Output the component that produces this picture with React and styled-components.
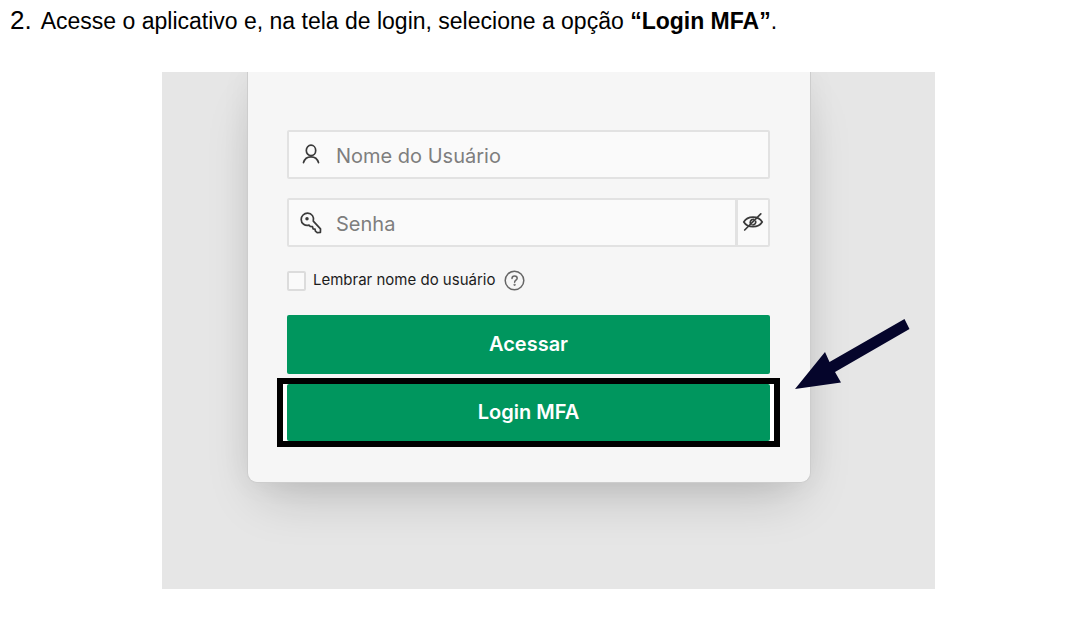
import React from 'react'
import styled, { createGlobalStyle } from 'styled-components'

const GlobalStyle = createGlobalStyle`
    * {
        box-sizing: border-box;
    }
    body {
        margin: 0;
        background: #ffffff;
        font-family: "Liberation Sans", Arial, sans-serif;
        color: #000000;
    }
`

const Page = styled.main`
    padding: 0 10px 40px;
`

const Step = styled.p`
    display: flex;
    align-items: baseline;
    gap: 9px;
    margin: 0;
    padding-top: 4px;
    font-size: 23px;
    line-height: 32px;
`

const StepNumber = styled.span`
    font-size: 26px;
`

const StepBody = styled.div`
    padding: 35px 0 0 30px;
`

const Screen = styled.figure`
    position: relative;
    max-width: 773px;
    margin: 0 auto;
    padding: 0 124px 106px 85px;
    overflow: hidden;
    background: #e6e6e6;
`

const Card = styled.form`
    display: flex;
    flex-direction: column;
    padding: 58px 40px 35px 39px;
    border: 1px solid #cdcdcd;
    border-top: 0;
    border-radius: 0 0 10px 10px;
    background: #f6f6f6;
    box-shadow: 0 24px 50px -14px rgba(0, 0, 0, 0.2), 0 0 30px rgba(0, 0, 0, 0.05);
    font-family: Inter, "Liberation Sans", sans-serif;
`

const Field = styled.div`
    display: flex;
    align-items: center;
    height: 49px;
    margin-bottom: ${props => props.$last ? '24px' : '19px'};
    padding-left: 11px;
    border: 2px solid #e2e2e2;
    border-radius: 2px;
    background: #fafafa;
`

const TextInput = styled.input`
    flex: 1;
    min-width: 0;
    height: 100%;
    padding: 2px 0 0 14px;
    border: 0;
    outline: 0;
    background: transparent;
    font-family: inherit;
    font-size: 20px;
    color: #333333;
    &::placeholder {
        color: #7e7e7e;
        opacity: 1;
    }
`

const IconButton = styled.button`
    display: flex;
    align-items: center;
    justify-content: center;
    border: 0;
    padding: 0;
    background: transparent;
    cursor: pointer;
`

const RevealButton = styled(IconButton)`
    width: 33px;
    height: 100%;
    padding-bottom: 2px;
    border-left: 3px solid #e2e2e2;
`

const Options = styled.div`
    display: flex;
    align-items: center;
    height: 20px;
    margin-bottom: 24px;
`

const Checkbox = styled.input`
    appearance: none;
    width: 19px;
    height: 20px;
    margin: 0 7px 0 0;
    border: 2px solid #dcdcdc;
    border-radius: 2px;
    background: #fafafa;
    &:checked {
        background: #00965e;
    }
`

const CheckLabel = styled.label`
    margin-right: 9px;
    padding-bottom: 2px;
    font-size: 15px;
    line-height: 18px;
    color: #1c1c1c;
`

const HelpButton = styled(IconButton)`
    padding-bottom: 1px;
`

const Button = styled.button`
    width: 100%;
    height: ${props => props.$short ? '57px' : '59px'};
    padding: 0 0 1px;
    border: 0;
    border-radius: 2px;
    background: #00965e;
    font-family: inherit;
    font-size: 20px;
    font-weight: 600;
    color: #ffffff;
    cursor: pointer;
`

const Highlight = styled.div`
    display: flex;
    margin: 4px -10px 0;
    padding: 0 4px;
    border: 6px solid #000000;
    background: #ffffff;
`

const Arrow = styled.svg`
    position: absolute;
    top: 247px;
    right: 24px;
`

const UserIcon = () => (
    <svg width="22" height="22" viewBox="0 0 22 22" fill="none" stroke="#3a3a3a" strokeWidth="1.7" strokeLinecap="round" aria-hidden="true">
        <ellipse cx="11" cy="6.4" rx="4.7" ry="5.2" />
        <path d="M3.5 18.600C4.500 15 7.300 12.800 11 12.800S17.500 15 18.500 18.600" />
    </svg>
)

const KeyIcon = () => (
    <svg width="22" height="22" viewBox="0 0 22 22" fill="none" stroke="#3a3a3a" strokeWidth="1.7" strokeLinejoin="round" aria-hidden="true">
        <path d="M13.300 9.200C14.500 5 11.800 1.200 7.600 1.200 4 1.200 1.200 3.900 1.200 7.400 1.200 11.600 5 14.200 9 13.100L10.300 14.500 12.500 14.600 13.100 16.900 15 17.200 15.400 19.200 17.200 20.700 20.400 20.500 20.500 16.900z" />
        <circle cx="7" cy="6.800" r="0.900" fill="#3a3a3a" />
    </svg>
)

const EyeOffIcon = () => (
    <svg width="22" height="22" viewBox="0 0 22 22" fill="none" stroke="#3a3a3a" strokeWidth="1.7" strokeLinecap="round" aria-hidden="true">
        <path d="M1.800 11C5.500 4.400 16.500 4.400 20.200 11 16.500 17.200 5.500 17.200 1.800 11z" />
        <path d="M9 13.300C7.200 11.200 8.800 8.200 11.500 8.400M13.600 10.200C14.200 12.300 12.700 13.800 10.900 13.800" />
        <path d="M2.700 19L18.800 2.800" />
    </svg>
)

const HelpIcon = () => (
    <svg width="21" height="21" viewBox="0 0 21 21" fill="none" stroke="#666666" strokeWidth="1.5" strokeLinecap="round" aria-hidden="true">
        <circle cx="10.500" cy="10.500" r="9.300" />
        <path d="M8 8.500c0-3.400 5.200-3.200 5.200-.2 0 1.900-2.600 1.900-2.600 3.900" />
        <circle cx="10.600" cy="14.800" r="0.400" fill="#666666" />
    </svg>
)

function App() {
    return (
        <Page>
            <GlobalStyle />
            <Step>
                <StepNumber>2.</StepNumber>
                <span>Acesse o aplicativo e, na tela de login, selecione a opção <strong>“Login MFA”</strong>.</span>
            </Step>
            <StepBody>
                <Screen>
                    <Card onSubmit={e => e.preventDefault()}>
                        <Field>
                            <UserIcon />
                            <TextInput type="text" placeholder="Nome do Usuário" aria-label="Nome do Usuário" />
                        </Field>
                        <Field $last>
                            <KeyIcon />
                            <TextInput type="password" placeholder="Senha" aria-label="Senha" />
                            <RevealButton type="button" aria-label="Mostrar senha">
                                <EyeOffIcon />
                            </RevealButton>
                        </Field>
                        <Options>
                            <Checkbox type="checkbox" id="remember" />
                            <CheckLabel htmlFor="remember">Lembrar nome do usuário</CheckLabel>
                            <HelpButton type="button" aria-label="Ajuda">
                                <HelpIcon />
                            </HelpButton>
                        </Options>
                        <Button type="submit">Acessar</Button>
                        <Highlight>
                            <Button type="button" $short>Login MFA</Button>
                        </Highlight>
                    </Card>
                    <Arrow width="116" height="72" viewBox="0 0 116 72" aria-hidden="true">
                        <path d="M0 70L30 33 34.500 43 109.500 0 114.500 10 40 53 46 63.500z" fill="#05052b" />
                    </Arrow>
                </Screen>
            </StepBody>
        </Page>
    )
}

export default App
